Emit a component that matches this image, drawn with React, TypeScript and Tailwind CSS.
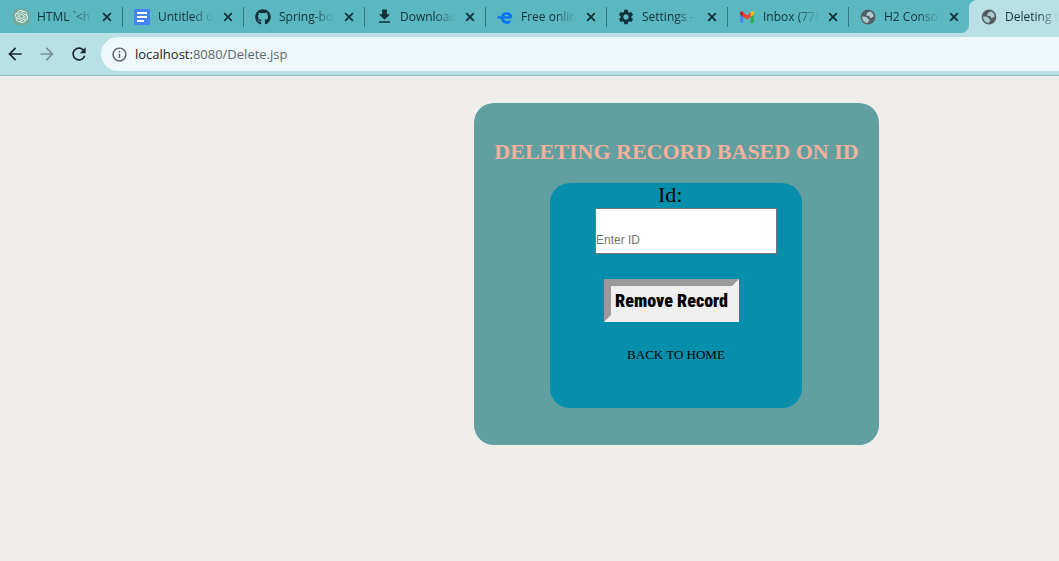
import type { ReactNode } from "react";
import { FaGithub } from "react-icons/fa";
import { SiOpenai } from "react-icons/si";
import {
  MdArrowBack,
  MdArrowForward,
  MdFileDownload,
  MdInfoOutline,
  MdRefresh,
  MdSettings,
} from "react-icons/md";

function ChatIcon() {
  return (
    <span className="flex size-4 items-center justify-center rounded-sm bg-[#75a99c] text-[#f0f7ee]">
      <SiOpenai size={13} />
    </span>
  );
}

function DocsIcon() {
  return (
    <svg viewBox="0 0 16 16" className="size-4" aria-hidden="true">
      <rect width="16" height="16" rx="1" fill="#4583f0" />
      <path d="M3 4h10M3 8h10M3 12h7" stroke="#fff" strokeWidth="2" />
    </svg>
  );
}

function SwooshIcon() {
  return (
    <svg viewBox="0 0 16 16" className="size-4" fill="none" aria-hidden="true">
      <path d="M0.5 8.4H14.6" stroke="#0b72f5" strokeWidth="2.4" />
      <path
        d="M5.2 7.6A4.6 4.6 0 0 1 14.1 8.4M5.200 9.200A4.700 4.700 0 0 0 13.400 12"
        stroke="#0b72f5"
        strokeWidth="2.6"
      />
    </svg>
  );
}

function MailIcon() {
  return (
    <svg viewBox="0 0 16 16" className="size-4" aria-hidden="true">
      <path d="M1 4.5V13a1 1 0 0 0 1 1h2.4V7z" fill="#4285f4" />
      <path d="M11.6 7v7H14a1 1 0 0 0 1-1V4.5z" fill="#34a853" />
      <path d="M11.6 3.5V8L15 5.4V4c0-1.7-1.9-2.5-3-1.5z" fill="#fbbc04" />
      <path d="M4.4 8V3.5L8 6.2l3.6-2.7V8L8 10.7z" fill="#ea4335" />
      <path d="M1 4v1.4L4.4 8V3.5L4 2.7C2.7 1.7 1 2.5 1 4z" fill="#c5221f" />
    </svg>
  );
}

function GlobeIcon() {
  return (
    <svg viewBox="0 0 16 16" className="size-4" aria-hidden="true">
      <circle cx="8" cy="8" r="7.4" fill="#565d62" />
      <path
        d="M2.200 7.600c1.600-.4 3.600-.2 4.800.8 1 .8.8 1.800 2 2 .8.200.6 1.400-.2 1.800-.8.400-.6 1.600-1.600 1.800C4.400 13.800 2 11.200 2.200 7.600z"
        fill="#a9cdd1"
      />
      <path
        d="M9.400 2.300c-.2 1.300-1.400 1-2.200 1.500-.7.500 0 1.400-.8 1.900-.7.500.3 1.400 1.300 1.200 1.200-.2 2 .3 2.200 1.300.2 1 1.600 1.200 2 .3.400-.8 1.200-.5 1.900-.7-.1-2.700-1.900-4.900-4.400-5.500z"
        fill="#a9cdd1"
      />
    </svg>
  );
}

function CloseIcon() {
  return (
    <svg viewBox="0 0 14 14" className="size-3.5" aria-hidden="true">
      <path d="M3.2 3.2l7.6 7.6M10.8 3.2l-7.6 7.6" stroke="currentColor" strokeWidth="1.8" />
    </svg>
  );
}

type Tab = { title: string; icon: ReactNode };

const tabs: Tab[] = [
  { title: "HTML `<h", icon: <ChatIcon /> },
  { title: "Untitled d", icon: <DocsIcon /> },
  { title: "Spring-bo", icon: <FaGithub size={16} /> },
  { title: "Download", icon: <MdFileDownload size={19} className="shrink-0" /> },
  { title: "Free onlin", icon: <SwooshIcon /> },
  { title: "Settings -", icon: <MdSettings size={18} className="shrink-0" /> },
  { title: "Inbox (776", icon: <MailIcon /> },
  { title: "H2 Conso", icon: <GlobeIcon /> },
];

function TabLabel({ title, icon }: Tab) {
  return (
    <>
      <span className="flex size-4 shrink-0 items-center justify-center">{icon}</span>
      <span className="ml-2 w-14 whitespace-nowrap mask-r-from-60% text-xs">{title}</span>
    </>
  );
}

function TabStrip() {
  return (
    <div className="flex h-[33px] bg-[#b9e0e4] text-[#12303a]">
      <ul className="flex shrink-0 rounded-br-lg bg-[#5cb8c0] pl-0.5">
        {tabs.map((tab) => (
          <li
            key={tab.title}
            className="group flex w-[121px] shrink-0 items-center pl-[11px] last:w-[120px]"
          >
            <TabLabel {...tab} />
            <button type="button" aria-label="Close tab" className="ml-[7px] shrink-0">
              <CloseIcon />
            </button>
            <span className="ml-auto h-5 w-px bg-[#2e7880] group-last:hidden" />
          </li>
        ))}
      </ul>
      <div className="min-w-0 flex-1 bg-[#5cb8c0]">
        <div className="flex h-full items-center rounded-tl-lg bg-[#b9e0e4] pl-3">
          <TabLabel title="Deleting t" icon={<GlobeIcon />} />
        </div>
      </div>
    </div>
  );
}

function Toolbar() {
  return (
    <div className="flex h-[43px] items-center border-b border-[#8fb9c3] bg-[#b9e0e4] pl-[5px] text-[#17282d]">
      <button type="button" aria-label="Back">
        <MdArrowBack size={20} />
      </button>
      <button type="button" aria-label="Forward" className="ml-3 text-[#75929a]">
        <MdArrowForward size={20} />
      </button>
      <button type="button" aria-label="Reload" className="ml-3">
        <MdRefresh size={20} />
      </button>
      <div className="ml-3 flex h-[34px] flex-1 items-center rounded-l-full bg-[#eef7f9] pl-2.5">
        <MdInfoOutline size={17} className="shrink-0 text-[#525c61]" />
        <span className="ml-[7px] pt-0.5 text-[13px] text-[#5d686e]">
          <span className="text-[#1c2427]">localhost:</span>8080/Delete.jsp
        </span>
      </div>
    </div>
  );
}

export default function App() {
  return (
    <div className="flex min-h-screen flex-col overflow-x-hidden bg-[#efeeec]">
      <header className="font-['Open_Sans','Noto_Sans',sans-serif]">
        <TabStrip />
        <Toolbar />
      </header>
      <main className="pt-[27px] pl-[474px] font-['Liberation_Serif',serif] text-black">
        <section className="w-[405px] rounded-[20px] bg-[#629fa1] pt-9 pb-[37px]">
          <h1 className="text-center text-[22px] leading-[26px] font-bold whitespace-nowrap text-[#f3b09a]">
            DELETING RECORD BASED ON ID
          </h1>
          <form
            className="mt-[18px] ml-[76px] flex h-[225px] w-[252px] flex-col rounded-[20px] bg-[#058fad]"
            onSubmit={(e) => e.preventDefault()}
          >
            <label htmlFor="record-id" className="pb-0.5 pl-[108px] text-[22px] leading-[23px]">
              Id:
            </label>
            <input
              id="record-id"
              type="text"
              placeholder="Enter ID"
              className="ml-[45px] h-[46px] w-[182px] border border-[#767676] bg-white pt-[18px] font-['Liberation_Sans',sans-serif] text-xs placeholder:text-[#757575]"
            />
            <button
              type="submit"
              className="mt-[25px] ml-[54px] h-[43px] w-[135px] border-[7px] border-t-[#9b9a98] border-r-[#f0f0f0] border-b-[#f0f0f0] border-l-[#9b9a98] bg-[#efefef] font-['Roboto_Condensed','Liberation_Sans_Narrow','Liberation_Sans',sans-serif] text-lg leading-none font-black whitespace-nowrap"
            >
              Remove Record
            </button>
            <a href="#home" className="mt-[25px] text-center text-[13px] leading-4">
              BACK TO HOME
            </a>
          </form>
        </section>
      </main>
    </div>
  );
}
